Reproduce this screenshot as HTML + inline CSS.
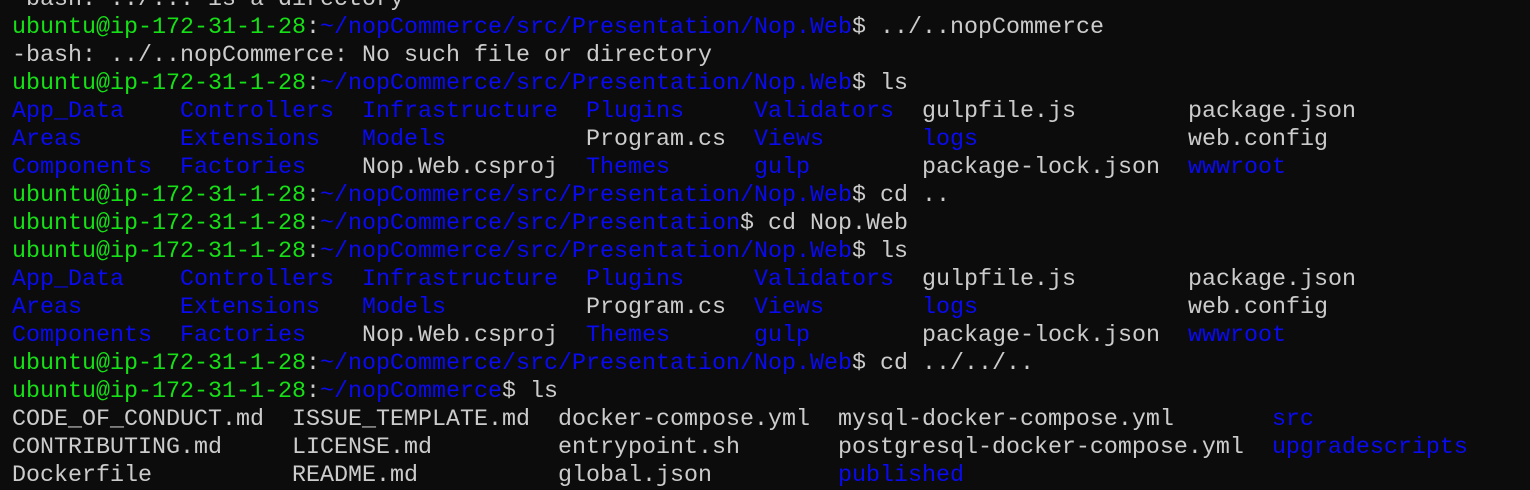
<!DOCTYPE html>
<html><head><meta charset="utf-8"><style>
html,body{margin:0;padding:0;background:#0c0c0c;width:1530px;height:489px;overflow:hidden}
pre{position:absolute;left:12px;top:-14px;margin:0;font-family:"Liberation Mono",monospace;font-size:23.33px;line-height:28px;color:#cccccc;white-space:pre}
.g{color:#16e016}.b{color:#0a0af0}
</style></head><body><pre>-bash: ../... is a directory
<span class="g">ubuntu@ip-172-31-1-28</span>:<span class="b">~/nopCommerce/src/Presentation/Nop.Web</span>$ ../..nopCommerce
-bash: ../..nopCommerce: No such file or directory
<span class="g">ubuntu@ip-172-31-1-28</span>:<span class="b">~/nopCommerce/src/Presentation/Nop.Web</span>$ ls
<span class="b">App_Data</span>    <span class="b">Controllers</span>  <span class="b">Infrastructure</span>  <span class="b">Plugins</span>     <span class="b">Validators</span>  gulpfile.js        package.json
<span class="b">Areas</span>       <span class="b">Extensions</span>   <span class="b">Models</span>          Program.cs  <span class="b">Views</span>       <span class="b">logs</span>               web.config
<span class="b">Components</span>  <span class="b">Factories</span>    Nop.Web.csproj  <span class="b">Themes</span>      <span class="b">gulp</span>        package-lock.json  <span class="b">wwwroot</span>
<span class="g">ubuntu@ip-172-31-1-28</span>:<span class="b">~/nopCommerce/src/Presentation/Nop.Web</span>$ cd ..
<span class="g">ubuntu@ip-172-31-1-28</span>:<span class="b">~/nopCommerce/src/Presentation</span>$ cd Nop.Web
<span class="g">ubuntu@ip-172-31-1-28</span>:<span class="b">~/nopCommerce/src/Presentation/Nop.Web</span>$ ls
<span class="b">App_Data</span>    <span class="b">Controllers</span>  <span class="b">Infrastructure</span>  <span class="b">Plugins</span>     <span class="b">Validators</span>  gulpfile.js        package.json
<span class="b">Areas</span>       <span class="b">Extensions</span>   <span class="b">Models</span>          Program.cs  <span class="b">Views</span>       <span class="b">logs</span>               web.config
<span class="b">Components</span>  <span class="b">Factories</span>    Nop.Web.csproj  <span class="b">Themes</span>      <span class="b">gulp</span>        package-lock.json  <span class="b">wwwroot</span>
<span class="g">ubuntu@ip-172-31-1-28</span>:<span class="b">~/nopCommerce/src/Presentation/Nop.Web</span>$ cd ../../..
<span class="g">ubuntu@ip-172-31-1-28</span>:<span class="b">~/nopCommerce</span>$ ls
CODE_OF_CONDUCT.md  ISSUE_TEMPLATE.md  docker-compose.yml  mysql-docker-compose.yml       <span class="b">src</span>
CONTRIBUTING.md     LICENSE.md         entrypoint.sh       postgresql-docker-compose.yml  <span class="b">upgradescripts</span>
Dockerfile          README.md          global.json         <span class="b">published</span>
</pre></body></html>
